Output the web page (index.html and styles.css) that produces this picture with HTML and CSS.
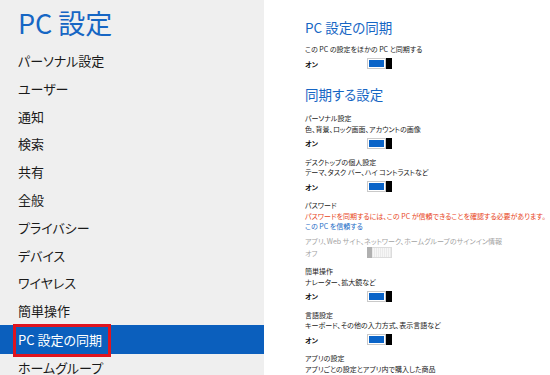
FILE: index.html
```html
<!DOCTYPE html>
<html lang="ja">
<head>
<meta charset="utf-8">
<title>PC 設定</title>
<link rel="stylesheet" href="styles.css">
</head>
<body>
<div class="page">
  <nav class="sidebar">
    <h1 class="title">PC 設定</h1>
    <ul class="menu">
      <li class="item">パーソナル設定</li>
      <li class="item">ユーザー</li>
      <li class="item">通知</li>
      <li class="item">検索</li>
      <li class="item">共有</li>
      <li class="item">全般</li>
      <li class="item">プライバシー</li>
      <li class="item">デバイス</li>
      <li class="item">ワイヤレス</li>
      <li class="item">簡単操作</li>
      <li class="item selected">PC 設定の同期<span class="mark"></span></li>
      <li class="item">ホームグループ</li>
    </ul>
  </nav>
  <main class="content">
    <h2 class="heading">PC 設定の同期</h2>
    <p class="line desc-first">この PC の設定をほかの PC と同期する</p>
    <div class="switch-row"><span class="state">オン</span><span class="toggle on"><span class="track"></span><span class="thumb"></span></span></div>

    <h2 class="heading second">同期する設定</h2>

    <section class="group first">
      <p class="line">パーソナル設定</p>
      <p class="line">色、背景、ロック画面、アカウントの画像</p>
      <div class="switch-row"><span class="state">オン</span><span class="toggle on"><span class="track"></span><span class="thumb"></span></span></div>
    </section>

    <section class="group">
      <p class="line">デスクトップの個人設定</p>
      <p class="line">テーマ、タスク バー、ハイ コントラストなど</p>
      <div class="switch-row"><span class="state">オン</span><span class="toggle on"><span class="track"></span><span class="thumb"></span></span></div>
    </section>

    <section class="group">
      <p class="line">パスワード</p>
      <p class="line warn">パスワードを同期するには、この PC が信頼できることを確認する必要があります。</p>
      <p class="line link">この PC を信頼する</p>
      <p class="line muted spaced">アプリ、Web サイト、ネットワーク、ホームグループのサインイン情報</p>
      <div class="switch-row tight"><span class="state muted-state">オフ</span><span class="toggle off"><span class="thumb"></span><span class="track"></span></span></div>
    </section>

    <section class="group">
      <p class="line">簡単操作</p>
      <p class="line">ナレーター、拡大鏡など</p>
      <div class="switch-row"><span class="state">オン</span><span class="toggle on"><span class="track"></span><span class="thumb"></span></span></div>
    </section>

    <section class="group">
      <p class="line">言語設定</p>
      <p class="line">キーボード、その他の入力方式、表示言語など</p>
      <div class="switch-row"><span class="state">オン</span><span class="toggle on"><span class="track"></span><span class="thumb"></span></span></div>
    </section>

    <section class="group">
      <p class="line">アプリの設定</p>
      <p class="line">アプリごとの設定とアプリ内で購入した商品</p>
    </section>
  </main>
</div>
</body>
</html>
```
FILE: styles.css
```css
* { box-sizing: border-box; }
html, body { margin: 0; padding: 0; }
body {
  width: 550px;
  height: 375px;
  overflow: hidden;
  background: #ffffff;
  font-family: "Noto Sans CJK JP", "Noto Sans", sans-serif;
  font-feature-settings: "palt";
  color: #1a1a1a;
}
.page {
  display: flex;
  height: 375px;
}
.sidebar {
  width: 264px;
  flex: none;
  background: #efefef;
  overflow: hidden;
}
.title {
  margin: 0;
  height: 47px;
  padding: 6px 0 0 18px;
  font-size: 27px;
  line-height: 34px;
  font-weight: 400;
  color: #1666c4;
}
.menu {
  list-style: none;
  margin: 0;
  padding: 0;
}
.item {
  position: relative;
  height: 27.8px;
  line-height: 27.8px;
  padding-left: 18px;
  font-size: 13px;
  color: #1a1a1a;
}
.item.selected {
  background: #0b5fbd;
  color: #ffffff;
  height: 29px;
  line-height: 29px;
}
.mark {
  position: absolute;
  left: 13px;
  top: -1px;
  width: 98px;
  height: 33px;
  border: 3px solid #e0141e;
}
.content {
  flex: 1;
  padding: 17px 0 0 41px;
}
.heading {
  margin: 0;
  font-size: 13.5px;
  line-height: 20px;
  font-weight: 400;
  color: #1666c4;
}
.heading.second {
  margin-top: 14px;
}
.line {
  margin: 0;
  font-size: 7px;
  line-height: 10.5px;
  white-space: nowrap;
  color: #1a1a1a;
}
.desc-first { margin-top: 7px; }
.group { margin-top: 7.5px; }
.group.first { margin-top: 9.5px; }
.warn { color: #e8461c; }
.link { color: #1a6bc6; }
.muted { color: #a3a3a3; }
.spaced { margin-top: 4px; }
.switch-row {
  display: flex;
  align-items: center;
  height: 12px;
  margin-top: 3px;
}
.switch-row.tight { margin-top: 0.5px; }
.state {
  width: 62px;
  font-size: 7px;
  font-weight: 700;
  color: #111;
}
.state.muted-state {
  font-weight: 400;
  color: #a3a3a3;
}
.toggle {
  display: flex;
  width: 25px;
  height: 11px;
}
.toggle .track {
  flex: 1;
  border: 1px solid #c4c4c4;
}
.toggle.on .track {
  background: #0a64c8;
  border-color: #c9c9c9;
  box-shadow: inset 0 0 0 1px #ffffff;
}
.toggle.on .thumb {
  width: 6px;
  background: #000000;
}
.toggle.off .track {
  background: repeating-linear-gradient(90deg, #eaeaea 0 1px, #f6f6f6 1px 2px);
  border-color: #dcdcdc;
  border-left: none;
}
.toggle.off .thumb {
  width: 5px;
  background: #b0b0b0;
}
```
